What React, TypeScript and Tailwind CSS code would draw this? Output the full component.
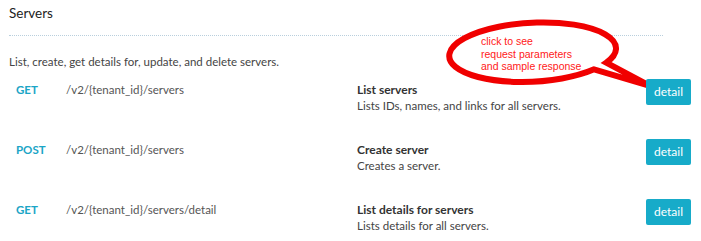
import React from "react";

const rows = [
  { m: "GET", path: "/v2/{tenant_id}/servers", title: "List servers", desc: "Lists IDs, names, and links for all servers." },
  { m: "POST", path: "/v2/{tenant_id}/servers", title: "Create server", desc: "Creates a server." },
  { m: "GET", path: "/v2/{tenant_id}/servers/detail", title: "List details for servers", desc: "Lists details for all servers." },
];

export default function App() {
  return (
    <div className="relative w-[701px] h-[241px] bg-white overflow-hidden" style={{ fontFamily: "Lato, 'Noto Sans', sans-serif" }}>
      <div className="pl-[9px] pr-[10px]">
        <div className="mr-[28px] pt-[3px] h-[36px] text-[13.5px] text-[#222] border-b border-dotted border-[#b9cfdd]">Servers</div>
        <div className="mt-[18px] text-[11.5px] text-[#444] leading-[16px]">List, create, get details for, update, and delete servers.</div>
        <div className="mt-[9px] flex flex-col gap-[34px]">
          {rows.map((r, i) => (
            <div key={i} className="flex items-start h-[26px]">
              <div className="w-[57px] pl-[7px] pt-[3px] text-[11.5px] font-bold text-[#1ba5c6] leading-[16px]">{r.m}</div>
              <div className="w-[291px] pt-[3px] text-[11.5px] text-[#555] leading-[16px]">{r.path}</div>
              <div className="flex-1 pt-[3px]">
                <div className="text-[12px] font-bold text-[#333] leading-[16px]">{r.title}</div>
                <div className="text-[11.5px] text-[#444] leading-[16px]">{r.desc}</div>
              </div>
              <button className="relative z-10 w-[45px] h-[26px] rounded-[2px] bg-[#17abc9] text-white text-[12px] leading-[26px] text-center">detail</button>
            </div>
          ))}
        </div>
      </div>
      <svg className="absolute left-0 top-0 pointer-events-none" width="701" height="241">
        <g transform="rotate(-3 533 52)">
          <path d="M 605.6 66.5 A 83.5 29.5 0 1 0 593.1 72.5 L 648 92 Z"
            fill="white" stroke="#f00000" strokeWidth="6" strokeLinejoin="miter" strokeMiterlimit="20" />
        </g>
        <text x="481" y="45" fill="#ff2020" fontSize="10.5" fontFamily="'Liberation Sans', Arial, sans-serif">click to see</text>
        <text x="481" y="57.5" fill="#ff2020" fontSize="10.5" fontFamily="'Liberation Sans', Arial, sans-serif">request parameters</text>
        <text x="481" y="70" fill="#ff2020" fontSize="10.5" fontFamily="'Liberation Sans', Arial, sans-serif">and sample response</text>
      </svg>
    </div>
  );
}
